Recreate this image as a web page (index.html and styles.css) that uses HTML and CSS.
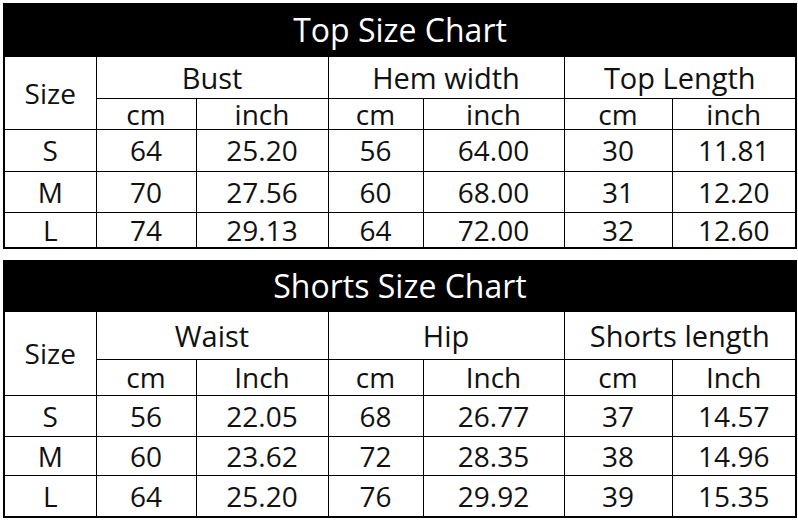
FILE: index.html
```html
<!DOCTYPE html>
<html>
<head>
<meta charset="utf-8">
<link rel="stylesheet" href="styles.css">
</head>
<body>
<div class="page">
  <table class="chart top">
    <colgroup>
      <col class="c1"><col class="c2"><col class="c3"><col class="c4"><col class="c5"><col class="c6"><col class="c7">
    </colgroup>
    <tr class="title"><th colspan="7">Top Size Chart</th></tr>
    <tr class="group"><td rowspan="2" class="size">Size</td><td colspan="2">Bust</td><td colspan="2">Hem width</td><td colspan="2">Top Length</td></tr>
    <tr class="sub"><td>cm</td><td>inch</td><td>cm</td><td>inch</td><td>cm</td><td>inch</td></tr>
    <tr class="r1"><td>S</td><td>64</td><td>25.20</td><td>56</td><td>64.00</td><td>30</td><td>11.81</td></tr>
    <tr class="r2"><td>M</td><td>70</td><td>27.56</td><td>60</td><td>68.00</td><td>31</td><td>12.20</td></tr>
    <tr class="r3"><td>L</td><td>74</td><td>29.13</td><td>64</td><td>72.00</td><td>32</td><td>12.60</td></tr>
  </table>
  <table class="chart bottom">
    <colgroup>
      <col class="c1"><col class="c2"><col class="c3"><col class="c4"><col class="c5"><col class="c6"><col class="c7">
    </colgroup>
    <tr class="title"><th colspan="7">Shorts Size Chart</th></tr>
    <tr class="group"><td rowspan="2" class="size">Size</td><td colspan="2">Waist</td><td colspan="2">Hip</td><td colspan="2">Shorts length</td></tr>
    <tr class="sub"><td>cm</td><td>Inch</td><td>cm</td><td>Inch</td><td>cm</td><td>Inch</td></tr>
    <tr class="r1"><td>S</td><td>56</td><td>22.05</td><td>68</td><td>26.77</td><td>37</td><td>14.57</td></tr>
    <tr class="r2"><td>M</td><td>60</td><td>23.62</td><td>72</td><td>28.35</td><td>38</td><td>14.96</td></tr>
    <tr class="r3"><td>L</td><td>64</td><td>25.20</td><td>76</td><td>29.92</td><td>39</td><td>15.35</td></tr>
  </table>
</div>
</body>
</html>
```
FILE: styles.css
```css
html, body {
  margin: 0;
  padding: 0;
  background: #fff;
}
.page {
  padding: 3px 3px 0 3px;
  display: flex;
  flex-direction: column;
  gap: 11px;
  font-family: "Open Sans", "Noto Sans", sans-serif;
  color: #111;
}
.chart {
  width: 792px;
  table-layout: fixed;
  border-collapse: collapse;
  border: 2px solid #000;
}
.c1 { width: 92px; }
.c2 { width: 100px; }
.c3 { width: 132px; }
.c4 { width: 95px; }
.c5 { width: 141px; }
.c6 { width: 108px; }
.c7 { width: 124px; }
.chart th, .chart td {
  padding: 0;
  border: 1px solid #000;
  text-align: center;
  vertical-align: middle;
  line-height: 1;
  font-weight: 400;
  font-size: 28px;
  white-space: nowrap;
}
.chart .group td {
  font-size: 29px;
}
.chart .group td.size {
  font-size: 28px;
}
.chart .title th {
  background: #000;
  color: #fff;
  font-size: 32px;
}
.top .title { height: 52px; }
.top .group { height: 42px; }
.top .sub { height: 31px; }
.top .r1 { height: 42px; }
.top .r2 { height: 41px; }
.top .r3 { height: 36px; }
.bottom .title { height: 50px; }
.bottom .group { height: 48px; }
.bottom .sub { height: 36px; }
.bottom .r1 { height: 41px; }
.bottom .r2 { height: 39px; }
.bottom .r3 { height: 42px; }
```
